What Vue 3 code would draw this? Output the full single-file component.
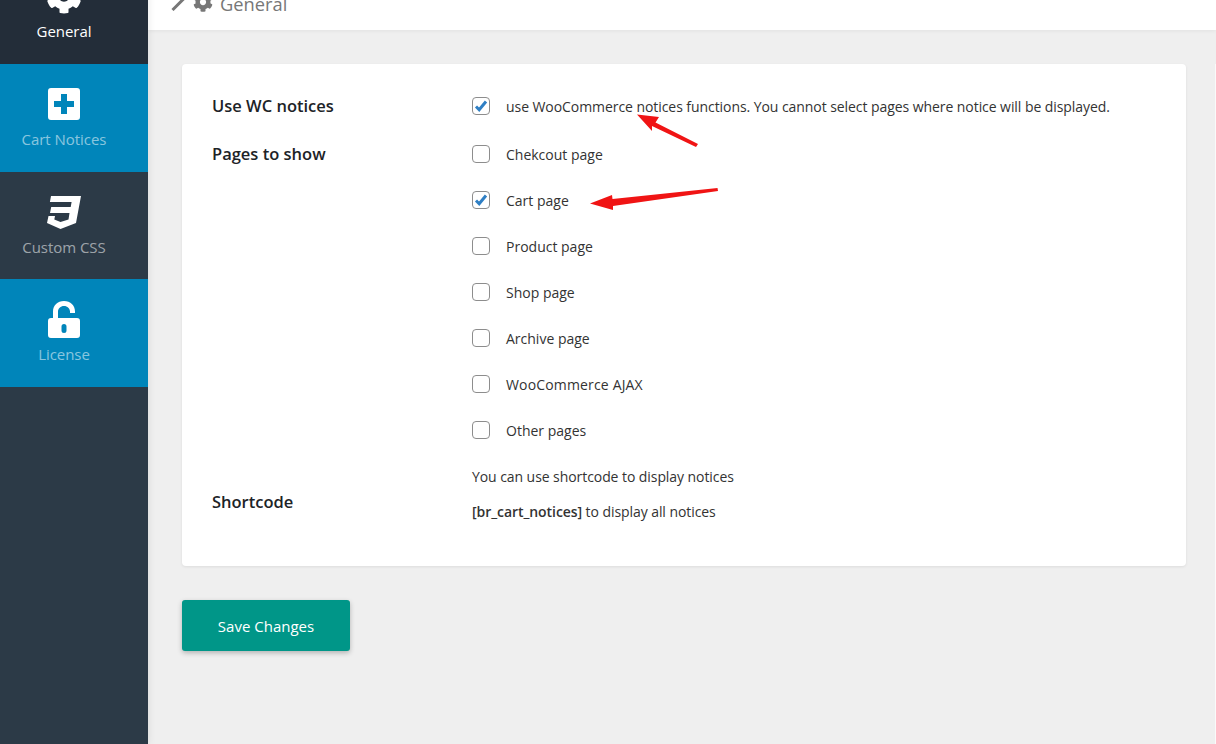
<script setup>
const gear = "M487.4 315.7l-42.6-24.6c4.3-23.2 4.3-47 0-70.2l42.6-24.6c4.9-2.8 7.1-8.6 5.5-14-11.1-35.6-30-67.8-54.7-94.6-3.8-4.1-10-5.1-14.8-2.3L380.8 110c-17.9-15.4-38.5-27.3-60.8-35.1V25.8c0-5.6-3.9-10.5-9.4-11.7-36.7-8.2-74.3-7.8-109.2 0-5.5 1.2-9.4 6.1-9.4 11.7V75c-22.2 7.9-42.8 19.8-60.8 35.1L88.7 85.5c-4.9-2.8-11-1.9-14.8 2.3-24.7 26.7-43.6 58.9-54.7 94.6-1.7 5.4.6 11.2 5.5 14L67.3 221c-4.3 23.2-4.3 47 0 70.2l-42.6 24.6c-4.9 2.8-7.1 8.6-5.5 14 11.1 35.6 30 67.8 54.7 94.6 3.8 4.1 10 5.1 14.8 2.3l42.6-24.6c17.9 15.4 38.5 27.3 60.8 35.1v49.2c0 5.6 3.9 10.5 9.4 11.7 36.7 8.2 74.3 7.8 109.2 0 5.5-1.2 9.4-6.1 9.4-11.7v-49.2c22.2-7.9 42.8-19.8 60.8-35.1l42.6 24.6c4.9 2.8 11 1.9 14.8-2.3 24.7-26.7 43.6-58.9 54.7-94.6 1.5-5.5-.7-11.3-5.6-14.1zM256 336c-44.1 0-80-35.9-80-80s35.9-80 80-80 80 35.9 80 80-35.9 80-80 80z"
const pages = [
  { label: 'Chekcout page', on: false },
  { label: 'Cart page', on: true },
  { label: 'Product page', on: false },
  { label: 'Shop page', on: false },
  { label: 'Archive page', on: false },
  { label: 'WooCommerce AJAX', on: false, wide: true },
  { label: 'Other pages', on: false },
]
</script>

<template>
  <div class="page">
    <aside class="side">
      <div class="item active">
        <div class="ico"><svg width="36" height="36" viewBox="0 0 512 512"><path :d="gear" fill="#fff" /></svg></div>
        <span class="lbl">General</span>
      </div>
      <div class="item blue">
        <div class="ico"><svg width="32" height="32" viewBox="0 0 32 32"><path fill="#fff" fill-rule="evenodd" d="M3 0h26a3 3 0 0 1 3 3v26a3 3 0 0 1-3 3H3a3 3 0 0 1-3-3V3a3 3 0 0 1 3-3zM13 6v7H6v6h7v7h6v-7h7v-6h-7V6z" /></svg></div>
        <span class="lbl">Cart Notices</span>
      </div>
      <div class="item css">
        <div class="ico"><svg width="34" height="33" viewBox="0 0 34 33"><path fill="#fff" d="M4 0H34L29 27L13.500 33L0 27L1.500 20H8L7.300 23.500L13.500 26L21.500 23.500L22.500 17H3L4.200 11H23.700L24.600 6H2.900Z" /></svg></div>
        <span class="lbl">Custom CSS</span>
      </div>
      <div class="item blue">
        <div class="ico"><svg width="32" height="37" viewBox="0 0 32 37"><path fill="#fff" fill-rule="evenodd" d="M5 17V10.500C5 4.500 9.500 0 16 0s11 4.500 11 10.500V12h-5v-1.500c0-3-2.500-5.500-6-5.500s-6 2.500-6 5.500V17H29a3 3 0 0 1 3 3v14a3 3 0 0 1-3 3H3a3 3 0 0 1-3-3V20a3 3 0 0 1 3-3zM16 23a2.500 2.500 0 0 0-2.500 2.500v4a2.500 2.500 0 0 0 5 0v-4a2.500 2.500 0 0 0-2.500-2.500z" /></svg></div>
        <span class="lbl">License</span>
      </div>
    </aside>

    <main class="main">
      <header class="top">
        <svg class="chev" width="14" height="24" viewBox="0 0 14 24"><path d="M1.500 23L12 12.500L1.500 2" fill="none" stroke="#777" stroke-width="3" /></svg>
        <svg class="cog" width="20" height="20" viewBox="0 0 512 512"><path :d="gear" fill="#777" /></svg>
        <span class="crumb">General</span>
      </header>

      <section class="card">
        <div class="row first">
          <div class="th">Use WC notices</div>
          <label class="chk tight"><span class="box"><svg width="14" height="12" viewBox="0 0 14 12"><path d="M2 6.500l3.200 3.200L12 1.500" fill="none" stroke="#2f7fc4" stroke-width="3" /></svg></span><span class="txt">use WooCommerce notices functions. You cannot select pages where notice will be displayed.</span></label>
        </div>
        <div class="row">
          <div class="th">Pages to show</div>
          <div class="list">
            <label v-for="p in pages" :key="p.label" class="chk" :class="{ wide: p.wide }">
              <span class="box"><svg v-if="p.on" width="14" height="12" viewBox="0 0 14 12"><path d="M2 6.500l3.200 3.200L12 1.500" fill="none" stroke="#2f7fc4" stroke-width="3" /></svg></span><span class="txt">{{ p.label }}</span>
            </label>
          </div>
        </div>
        <div class="row last">
          <div class="th short">Shortcode</div>
          <div class="notes">
            <p>You can use shortcode to display notices</p>
            <p><b>[br_cart_notices]</b> to display all notices</p>
          </div>
        </div>
      </section>

      <button class="save" type="button">Save Changes</button>
      <div class="edge"></div>
    </main>

    <svg class="arrows" width="1216" height="744" viewBox="0 0 1216 744">
      <path d="M637 114.500L659 117L655.500 122.500L698 144L696 147L652 126L652 131Z" fill="#f01414" />
      <path d="M590 203.500L612 195L612.500 199L717.500 188L718 191L613 206L613 210Z" fill="#f01414" />
    </svg>
  </div>
</template>

<style>
html, body { margin: 0; background: #efefef; }
</style>

<style scoped>
.page {
  position: relative;
  display: flex;
  width: 1216px;
  height: 744px;
  overflow: hidden;
  background: #efefef;
  font-family: "Open Sans", "Noto Sans", sans-serif;
  color: #222;
}
.side {
  position: relative;
  z-index: 1;
  width: 148px;
  flex: none;
  margin-top: -44px;
  background: #2c3a47;
  height: 788px;
  box-shadow: 0 0 8px rgba(0,0,0,.1);
}
.item {
  height: 108px;
  box-sizing: border-box;
  padding: 24px 20px 0 0;
  display: flex;
  flex-direction: column;
  align-items: center;
  background: #2c3a47;
  color: rgba(255,255,255,.55);
}
.item.css { height: 107px; }
.item.active { background: #232d39; color: #fff; }
.item.blue { background: #0085ba; }
.ico { height: 32px; display: flex; align-items: center; justify-content: center; margin-bottom: 9px; }
.ico svg { display: block; flex: none; }
.lbl { font-size: 15px; line-height: 20px; white-space: nowrap; letter-spacing: -0.05px; }
.main { flex: 1; position: relative; min-width: 0; }
.top {
  height: 30px;
  box-sizing: border-box;
  background: #fff;
  box-shadow: 0 1px 4px rgba(0,0,0,.06);
  display: flex;
  align-items: flex-end;
  gap: 10px;
  padding-left: 23px;
  color: #777;
  overflow: hidden;
}
.top svg { flex: none; }
.chev { margin-bottom: 19px; }
.cog { margin-bottom: 18px; margin-left: -2px; }
.crumb { font-size: 18.300px; line-height: 24px; margin-bottom: 14px; margin-left: -3px; }
.card {
  margin: 34px 30px 0 34px;
  height: 502px;
  box-sizing: border-box;
  background: #fff;
  border-radius: 4px;
  box-shadow: 0 1px 3px rgba(0,0,0,.08);
  padding: 30px 30px 0;
}
.row { display: flex; }
.first { height: 48px; }
.th { width: 260px; flex: none; font-size: 16.500px; font-weight: 600; line-height: 24px; color: #1d2327; }
.chk { display: flex; align-items: center; font-size: 14px; height: 24px; line-height: 24px; color: #333; }
.txt { margin-top: 2px; }
.tight { letter-spacing: -0.065px; }
.wide { letter-spacing: 0.16px; }
.box {
  width: 18px;
  height: 18px;
  box-sizing: border-box;
  border: 1px solid #8d8d8d;
  border-radius: 4px;
  margin-right: 16px;
  display: flex;
  align-items: center;
  justify-content: center;
  flex: none;
  background: #fff;
}
.list { display: flex; flex-direction: column; gap: 22px; }
.last { margin-top: 23px; }
.short { padding-top: 25px; }
.notes { font-size: 14px; line-height: 24px; color: #333; letter-spacing: -0.07px; }
.notes p { margin: 0 0 11px; }
.notes b { font-weight: 600; }
.save {
  display: block;
  margin: 34px 0 0 34px;
  width: 168px;
  height: 51px;
  border: 0;
  border-radius: 3px;
  background: #009688;
  color: #fff;
  font: 15px "Open Sans", sans-serif;
  box-shadow: 0 2px 5px rgba(0,0,0,.25);
}
.edge { position: absolute; right: 0; top: 64px; bottom: 0; width: 1px; background: #fafafa; }
.arrows { position: absolute; left: 0; top: 0; z-index: 2; pointer-events: none; }
</style>
